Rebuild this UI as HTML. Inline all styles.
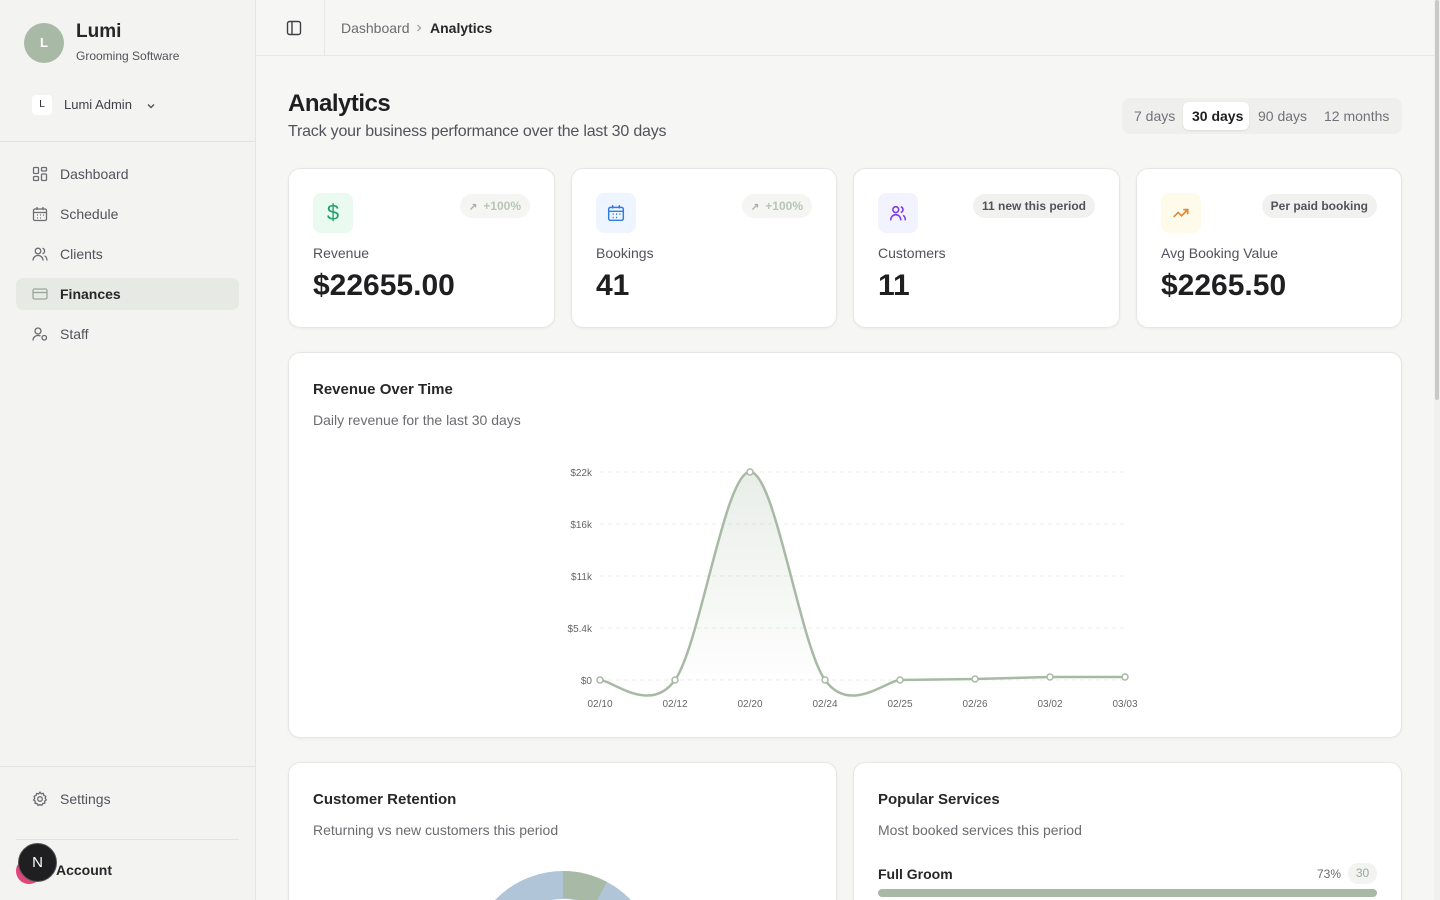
<!DOCTYPE html>
<html><head><meta charset="utf-8"><style>
*{box-sizing:border-box;margin:0;padding:0}
html,body{width:1440px;height:900px;overflow:hidden}
body{background:#f6f6f4;font-family:"Liberation Sans",sans-serif;color:#27272a}
#wrap{position:relative;width:1440px;height:900px;overflow:hidden}
.sb{position:absolute;left:0;top:0;width:256px;height:900px;background:#f3f4f2;border-right:1px solid #e5e5e2}
.abs{position:absolute}
.nav{position:absolute;left:16px;width:223px;height:32px;border-radius:7px;display:flex;align-items:center;padding-left:16px;font-size:14px;color:#52525b}
.nav svg{margin-right:12px}
.card{position:absolute;background:#fff;border:1px solid #e6e6e3;border-radius:12px;box-shadow:0 1px 3px rgba(0,0,0,.04)}
.ic{position:absolute;left:24px;top:24px;width:40px;height:40px;border-radius:8px;display:flex;align-items:center;justify-content:center}
.pill{position:absolute;right:24px;top:25px;height:24px;border-radius:12px;background:#f1f2f0;font-size:12px;font-weight:bold;padding:0 9px;line-height:24px;color:#52525b}
.lbl{position:absolute;left:24px;top:76px;font-size:14px;color:#52525b}
.val{position:absolute;left:24px;top:100px;font-size:30px;font-weight:bold;color:#1f1f22}
.ax{font-size:10px;fill:#666}
</style></head><body><div id="wrap">
<div class="sb">
 <div class="abs" style="left:24px;top:23px;width:40px;height:40px;border-radius:50%;background:#a8baa5;color:#fff;font-size:13px;font-weight:bold;text-align:center;line-height:40px">L</div>
 <div class="abs" style="left:76px;top:21px;font-size:19px;font-weight:bold;color:#27272a">Lumi</div>
 <div class="abs" style="left:76px;top:49px;font-size:12px;color:#52525b">Grooming Software</div>
 <div class="abs" style="left:32px;top:95px;width:20px;height:20px;border-radius:4px;background:#fff;font-size:10px;text-align:center;line-height:20px">L</div>
 <div class="abs" style="left:64px;top:97px;font-size:13px;color:#3f3f46">Lumi Admin</div>
 <svg class="abs" style="left:145px;top:100px" width="12" height="12" viewBox="0 0 12 12"><path d="M3 4.5l3 3 3-3" stroke="#52525b" stroke-width="1.4" fill="none"/></svg>
 <div class="abs" style="left:0;top:141px;width:255px;height:1px;background:#e2e2df"></div>
 <div class="nav" style="top:158px"><svg width="16" height="16" viewBox="0 0 16 16" fill="none" stroke="#6b6b70" stroke-width="1.3"><rect x="1.5" y="1.5" width="5" height="6" rx="1"/><rect x="9.5" y="1.5" width="5" height="3.5" rx="1"/><rect x="9.5" y="8" width="5" height="6.5" rx="1"/><rect x="1.5" y="10.5" width="5" height="4" rx="1"/></svg>Dashboard</div>
 <div class="nav" style="top:198px"><svg width="16" height="16" viewBox="0 0 16 16" fill="none" stroke="#6b6b70" stroke-width="1.3"><rect x="1.5" y="3" width="13" height="11.5" rx="1.5"/><path d="M1.5 6.5h13M5 1v3M11 1v3M5 9h1M8 9h1M11 9h1M5 12h1M8 12h1"/></svg>Schedule</div>
 <div class="nav" style="top:238px"><svg width="16" height="16" viewBox="0 0 16 16" fill="none" stroke="#6b6b70" stroke-width="1.3"><circle cx="6" cy="5" r="2.8"/><path d="M1 14.5c0-3 2.2-5 5-5s5 2 5 5M10.5 2.3a2.8 2.8 0 010 5.4M12.5 9.8c1.5.7 2.5 2.5 2.5 4.7"/></svg>Clients</div>
 <div class="nav" style="top:278px;background:#e6e9e4;color:#27272a;font-weight:bold"><svg width="16" height="16" viewBox="0 0 16 16" fill="none" stroke="#9aa898" stroke-width="1.3"><rect x="1" y="3" width="14" height="10" rx="1.5"/><path d="M1 6.5h14"/></svg>Finances</div>
 <div class="nav" style="top:318px"><svg width="16" height="16" viewBox="0 0 16 16" fill="none" stroke="#6b6b70" stroke-width="1.3"><circle cx="6" cy="5" r="3"/><path d="M1 14.5c0-3 2.2-5 5-5 1 0 1.8.2 2.5.6"/><rect x="10" y="9.5" width="4.5" height="4.5" rx="2.2"/></svg>Staff</div>
 <div class="abs" style="left:0;top:766px;width:255px;height:1px;background:#e2e2df"></div>
 <div class="nav" style="top:783px"><svg width="16" height="16" viewBox="0 0 16 16" fill="none" stroke="#6b6b70" stroke-width="1.3"><circle cx="8" cy="8" r="2.3"/><path d="M8 1.2l1.3 1.6 2-.4.6 2 1.9.9-.6 1.9 1.1 1.7-1.6 1.2.1 2.1-2 .3-1 1.8L8 13.6l-1.9.8-1-1.8-2-.3.1-2.1L1.6 9 2.7 7.3 2.1 5.4 4 4.5l.6-2 2 .4z"/></svg>Settings</div>
 <div class="abs" style="left:16px;top:839px;width:223px;height:1px;background:#e2e2df"></div>
 <div class="abs" style="left:16px;top:858px;width:26px;height:26px;border-radius:50%;background:#e0457b"></div>
 <div class="abs" style="left:18px;top:843px;width:39px;height:39px;border-radius:50%;background:#1f1f22;border:1px solid #555;color:#fff;font-size:15px;text-align:center;line-height:37px">N</div>
 <div class="abs" style="left:56px;top:862px;font-size:14px;font-weight:bold;color:#27272a">Account</div>
</div>
<div class="abs" style="left:256px;top:0;width:1178px;height:56px;border-bottom:1px solid #e7e7e4"></div>
<svg class="abs" style="left:286px;top:20px" width="16" height="16" viewBox="0 0 16 16" fill="none" stroke="#3f3f46" stroke-width="1.4"><rect x="1.5" y="1.5" width="13" height="13" rx="2"/><path d="M6 1.5v13"/></svg>
<div class="abs" style="left:324px;top:0;width:1px;height:56px;background:#e7e7e4"></div>
<div class="abs" style="left:341px;top:20px;font-size:14px;color:#6b6b70">Dashboard</div>
<svg class="abs" style="left:413px;top:22px" width="12" height="12" viewBox="0 0 12 12"><path d="M4.5 3l3 3-3 3" stroke="#9a9a9f" stroke-width="1.2" fill="none"/></svg>
<div class="abs" style="left:430px;top:20px;font-size:14px;color:#27272a;font-weight:bold">Analytics</div>
<div class="abs" style="left:1434px;top:0;width:6px;height:900px;background:#f0f0ee"></div>
<div class="abs" style="left:1435px;top:0;width:4px;height:400px;background:#c9c9c6;border-radius:2px"></div>

<div class="abs" style="left:288px;top:90px;font-size:24px;font-weight:bold;color:#1f1f22;letter-spacing:-.5px">Analytics</div>
<div class="abs" style="left:288px;top:123px;font-size:16px;color:#52525b;letter-spacing:-.2px">Track your business performance over the last 30 days</div>
<div class="abs" style="left:1122px;top:98px;width:280px;height:36px;background:#efefed;border-radius:8px;font-size:14px;color:#71717a">
 <span class="abs" style="left:12px;top:10px">7 days</span>
 <span class="abs" style="left:61px;top:4px;width:66px;height:28px;background:#fff;border-radius:6px;box-shadow:0 1px 2px rgba(0,0,0,.08)"></span>
 <span class="abs" style="left:70px;top:10px;color:#1f1f22;font-weight:bold">30 days</span>
 <span class="abs" style="left:136px;top:10px">90 days</span>
 <span class="abs" style="left:202px;top:10px">12 months</span>
</div>

<div class="card" style="left:288px;top:168px;width:267px;height:160px">
 <div class="ic" style="background:#eafaf1"><span style="color:#23a06b;font-size:22px">$</span></div>
 <div class="pill" style="color:#b8c6b5;background:#f5f6f4"><span style="font-size:10px;color:#aaa;margin-right:6px">↗</span>+100%</div>
 <div class="lbl">Revenue</div><div class="val">$22655.00</div></div>
<div class="card" style="left:571px;top:168px;width:266px;height:160px">
 <div class="ic" style="background:#eef5ff"><svg width="18" height="18" viewBox="0 0 16 16" fill="none" stroke="#2f7de1" stroke-width="1.3"><rect x="1.5" y="3" width="13" height="11.5" rx="1.5"/><path d="M1.5 6.5h13M5 1v3M11 1v3M5 9h1M8 9h1M11 9h1M5 12h1M8 12h1"/></svg></div>
 <div class="pill" style="color:#b8c6b5;background:#f5f6f4"><span style="font-size:10px;color:#aaa;margin-right:6px">↗</span>+100%</div>
 <div class="lbl">Bookings</div><div class="val">41</div></div>
<div class="card" style="left:853px;top:168px;width:267px;height:160px">
 <div class="ic" style="background:#f3f3ff"><svg width="18" height="18" viewBox="0 0 16 16" fill="none" stroke="#7c3aed" stroke-width="1.4"><circle cx="6" cy="5" r="2.6"/><path d="M1.5 14.5c0-3 2-5 4.5-5s4.5 2 4.5 5M10.5 2.5a2.6 2.6 0 010 5M12.5 10c1.3.8 2 2.4 2 4.5"/></svg></div>
 <div class="pill">11 new this period</div>
 <div class="lbl">Customers</div><div class="val">11</div></div>
<div class="card" style="left:1136px;top:168px;width:266px;height:160px">
 <div class="ic" style="background:#fffbea"><svg width="18" height="18" viewBox="0 0 16 16" fill="none" stroke="#e08a3a" stroke-width="1.5"><path d="M1.5 11.5l4-4 3 3 5.5-5.5M10 5h4v4"/></svg></div>
 <div class="pill">Per paid booking</div>
 <div class="lbl">Avg Booking Value</div><div class="val">$2265.50</div></div>

<div class="card" style="left:288px;top:352px;width:1114px;height:386px">
 <div class="abs" style="left:24px;top:28px;font-size:15px;font-weight:bold;color:#27272a">Revenue Over Time</div>
 <div class="abs" style="left:24px;top:59px;font-size:14px;color:#6b6b70">Daily revenue for the last 30 days</div>
</div>
<svg class="abs" style="left:0;top:0" width="1440" height="900">
 <defs><linearGradient id="g" x1="0" y1="0" x2="0" y2="1"><stop offset="0" stop-color="#a8baa5" stop-opacity=".25"/><stop offset="1" stop-color="#a8baa5" stop-opacity="0"/></linearGradient></defs>
 <g stroke="#ececea" stroke-dasharray="4 4"><path d="M600 472H1125M600 524H1125M600 576H1125M600 628H1125M600 680H1125"/></g>
 <g class="ax" text-anchor="end"><text x="592" y="476">$22k</text><text x="592" y="528">$16k</text><text x="592" y="580">$11k</text><text x="592" y="632">$5.4k</text><text x="592" y="684">$0</text></g>
 <g class="ax" text-anchor="middle"><text x="600" y="707">02/10</text><text x="675" y="707">02/12</text><text x="750" y="707">02/20</text><text x="825" y="707">02/24</text><text x="900" y="707">02/25</text><text x="975" y="707">02/26</text><text x="1050" y="707">03/02</text><text x="1125" y="707">03/03</text></g>
 <path d="M600 680C612 680 650 715 675 680C700 645 725 472 750 472C775 472 800 645 825 680C850 715 887 680 900 680L975 679L1050 677L1125 677V680H600Z" fill="url(#g)"/>
 <path d="M600 680C612 680 650 715 675 680C700 645 725 472 750 472C775 472 800 645 825 680C850 715 887 680 900 680L975 679L1050 677L1125 677" fill="none" stroke="#a8baa5" stroke-width="2.5"/>
 <g fill="#fff" stroke="#a8baa5" stroke-width="1.5"><circle cx="600" cy="680" r="3"/><circle cx="675" cy="680" r="3"/><circle cx="750" cy="472" r="3"/><circle cx="825" cy="680" r="3"/><circle cx="900" cy="680" r="3"/><circle cx="975" cy="679" r="3"/><circle cx="1050" cy="677" r="3"/><circle cx="1125" cy="677" r="3"/></g>
</svg>

<div class="card" style="left:288px;top:762px;width:549px;height:160px;overflow:hidden">
 <div class="abs" style="left:24px;top:28px;font-size:15px;font-weight:bold;color:#27272a">Customer Retention</div>
 <div class="abs" style="left:24px;top:59px;font-size:14px;color:#6b6b70">Returning vs new customers this period</div>
 <svg class="abs" style="left:179px;top:107px" width="190" height="190" viewBox="-95 -95 190 190">
  <circle r="80" fill="none" stroke="#b0c5d8" stroke-width="28"/>
  <path d="M0 -94A94 94 0 0 1 44 -83L31 -59A67 67 0 0 0 0 -67Z" fill="#a8baa5"/>
 </svg>
</div>
<div class="card" style="left:853px;top:762px;width:549px;height:160px">
 <div class="abs" style="left:24px;top:28px;font-size:15px;font-weight:bold;color:#27272a">Popular Services</div>
 <div class="abs" style="left:24px;top:59px;font-size:14px;color:#6b6b70">Most booked services this period</div>
 <div class="abs" style="left:24px;top:103px;font-size:14px;font-weight:bold;color:#27272a">Full Groom</div>
 <div class="abs" style="left:463px;top:104px;font-size:12px;color:#6b6b70">73%</div>
 <div class="abs" style="left:494px;top:100px;width:29px;height:21px;border-radius:10px;background:#f3f4f2;font-size:12px;color:#9aa898;text-align:center;line-height:21px">30</div>
 <div class="abs" style="left:24px;top:126px;width:499px;height:8px;border-radius:4px;background:#a8baa5"></div>
</div>
</div></body></html>
